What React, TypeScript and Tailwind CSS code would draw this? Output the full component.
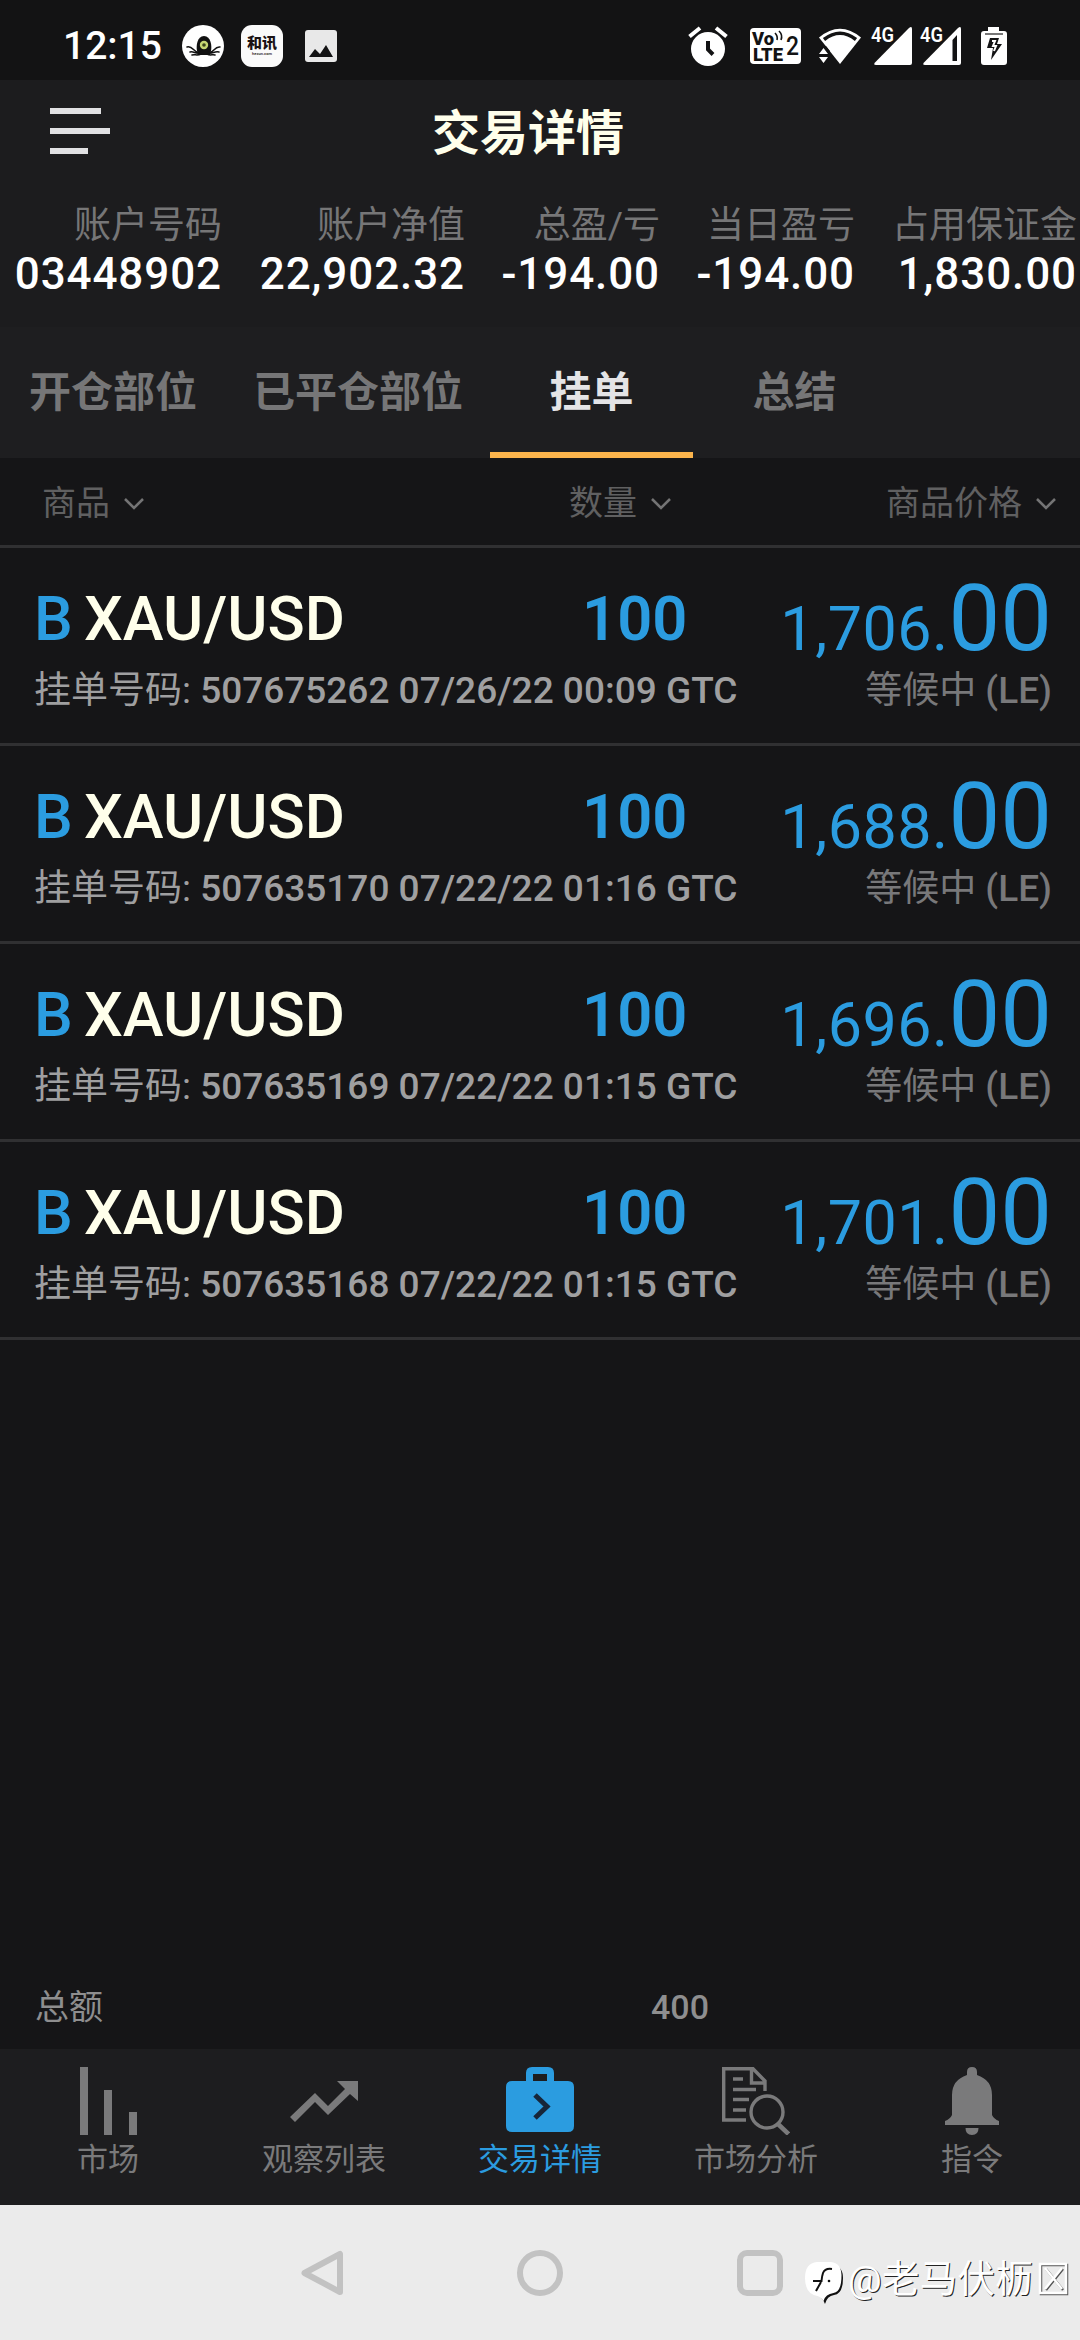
import type { ReactNode } from "react";

const account = [
  { label: "账户号码", value: "03448902", width: "w-[222px]" },
  { label: "账户净值", value: "22,902.32", width: "w-[243px]" },
  { label: "总盈/亏", value: "-194.00", width: "w-[195px]" },
  { label: "当日盈亏", value: "-194.00", width: "w-[195px]" },
  { label: "占用保证金", value: "1,830.00", width: "w-[222px]" }
];

const tabs = [
  { label: "开仓部位", width: "w-[226px]" },
  { label: "已平仓部位", width: "w-[264px]" },
  { label: "挂单", width: "w-[203px]", active: true },
  { label: "总结", width: "w-[203px]" }
];

const orders = [
  { id: "507675262", time: "07/26/22 00:09", price: "1,706." },
  { id: "507635170", time: "07/22/22 01:16", price: "1,688." },
  { id: "507635169", time: "07/22/22 01:15", price: "1,696." },
  { id: "507635168", time: "07/22/22 01:15", price: "1,701." }
];

function StatusBar() {
  return (
    <div className="flex h-20 shrink-0 items-center bg-[#131314] pr-[73px] pl-[63px] text-white">
      <span className="mt-3 w-[119px] text-[39px] leading-10 font-medium">12:15</span>

      <svg className="mt-3 h-[42px] w-[42px]" viewBox="0 0 42 42">
        <circle cx="21" cy="21" r="21" fill="#fff" />
        <path d="M15 26c-1-5 0-15 7-15s8 10 7 15l-3 4h-8z" fill="#111" />
        <g fill="none" stroke="#111" strokeWidth="1.500" strokeLinecap="round">
          <path d="M18 27c-6 2-7-7-13-5M18 28c-5 1-6-2-10-1M19 29c-4 2-6 0-9 1" />
          <path d="M26 27c6 2 6-6 12-5M26 28c5 1 6-2 11-1M25 29c4 2 5 0 8 1" />
        </g>
        <circle cx="22" cy="20" r="4.200" fill="#c5d672" />
        <circle cx="22" cy="20" r="1.800" fill="#39421a" />
      </svg>

      <span className="mt-3 ml-[17px] flex h-[42px] w-[42px] flex-col items-center rounded-[11px] bg-[#fafafa] pt-[10px] text-[#1b1214]">
        <span className="text-[15px] leading-4 font-black">和讯</span>
        <span className="text-[4px] leading-[6px] font-medium">hexun.com</span>
      </span>

      <svg className="mt-3 ml-[22px] h-8 w-8" viewBox="0 0 32 32">
        <rect width="32" height="32" rx="3" fill="#e8e8e8" />
        <path d="M4 27l6-8 5 5 6-9 7 12z" fill="#131314" />
      </svg>

      <div className="flex-1" />

      <svg className="mt-3 h-10 w-10" viewBox="0 0 40 40">
        <circle cx="20" cy="23" r="17" fill="#fff" />
        <path d="M1.500 10.500L12 2M38.500 10.500L28 2" stroke="#fff" strokeWidth="4" />
        <path d="M20 15v8.500l5 5" fill="none" stroke="#131314" strokeWidth="4" />
      </svg>

      <svg className="mt-3 ml-[22px] h-9 w-[51px]" viewBox="0 0 51 36">
        <rect width="51" height="36" rx="4" fill="#fff" />
        <g fill="#131314" fontWeight="900" fontSize="18">
          <text x="2" y="16.500" textLength="22" lengthAdjust="spacingAndGlyphs">Vo</text>
          <text x="3" y="32.500" textLength="30" lengthAdjust="spacingAndGlyphs">LTE</text>
          <text x="36" y="27" fontSize="25" fontWeight="500" textLength="13" lengthAdjust="spacingAndGlyphs">2</text>
        </g>
        <path d="M25 5q3 3 2 7M29 3q4 4 2 9" fill="none" stroke="#131314" strokeWidth="1.600" />
      </svg>

      <svg className="mt-3 ml-[18px] h-9 w-[42px]" viewBox="0 0 42 36">
        <path d="M0 9.500Q21-8 42 9.500L21 36z" fill="#fff" />
        <path d="M5 11.500Q21-1 37 11.500" fill="none" stroke="#131314" strokeWidth="3.600" />
        <path d="M-1 18h8l4 5-2 13h-10z" fill="#131314" />
        <path d="M0 26l4.500-6 4.500 6zM0 29h9l-4.500 6z" fill="#fff" />
      </svg>

      <Signal className="ml-[10px]" />
      <Signal className="ml-2" weak />

      <svg className="mt-3 ml-5 h-[38px] w-[26px]" viewBox="0 0 26 38">
        <path d="M7 4V0h11v4h5q3 0 3 3v28q0 3-3 3H3q-3 0-3-3V7q0-3 3-3z" fill="#fff" />
        <path d="M4 7h18" stroke="#777" strokeWidth="2" />
        <path d="M9 11h9l-2 6h5L10 33l2-12H6z" fill="#131314" />
        <path d="M11 14h3l-2 5h3l-2 5" fill="none" stroke="#fff" strokeWidth="2" />
      </svg>
    </div>
  );
}

function Signal({ className, weak }: { className: string; weak?: boolean }) {
  return (
    <svg className={`mt-3 h-[38px] w-[41px] overflow-visible ${className}`} viewBox="0 0 41 38">
      <path d="M41 2v34q0 2-2 2H5q-3 0-1-2.500L38 1q3-2.500 3 1z" fill="#fff" />
      {weak && <path d="M32.500 13l4.500-5v26h-4.500z" fill="#131314" />}
      <text
        x="0"
        y="15"
        fill="#fff"
        stroke="#131314"
        strokeWidth="3"
        paintOrder="stroke"
        fontSize="19.500"
        fontWeight="600"
        textLength="23"
        lengthAdjust="spacingAndGlyphs"
      >
        4G
      </text>
    </svg>
  );
}

function Header() {
  return (
    <header className="flex h-[108px] shrink-0">
      <div className="flex w-[432px] flex-col gap-[14px] pt-7 pl-[50px]">
        <span className="h-[6px] w-[51px] bg-[#e1e1e3]" />
        <span className="h-[6px] w-[60px] bg-[#e1e1e3]" />
        <span className="h-[6px] w-[38px] bg-[#e1e1e3]" />
      </div>
      <h1 className="text-[48px] leading-[108px] font-bold text-[#ffffeb]">交易详情</h1>
    </header>
  );
}

function Account() {
  return (
    <div className="flex h-[139px] shrink-0 pt-[17px] text-right">
      {account.map((item) => (
        <div key={item.label} className={`shrink-0 ${item.width}`}>
          <div className="text-[37px] leading-[42px] text-[#767677]">{item.label}</div>
          <div className="mt-[2px] text-[44px] leading-[50px] font-medium tracking-[0.9px] text-white">
            {item.value}
          </div>
        </div>
      ))}
    </div>
  );
}

function Tabs() {
  return (
    <nav className="flex h-[131px] shrink-0 bg-[#1e1e20] text-[42px] leading-[131px] font-bold text-[#767677]">
      {tabs.map((tab) => (
        <div
          key={tab.label}
          className={`text-center ${tab.width} ${
            tab.active ? "border-b-[6px] border-[#fbb44c] text-[#e4e4e6]" : ""
          }`}
        >
          {tab.label}
        </div>
      ))}
    </nav>
  );
}

function SortLabel({ children }: { children: ReactNode }) {
  return (
    <div className="flex items-center">
      {children}
      <svg className="ml-[14px] h-3 w-5" viewBox="0 0 20 12">
        <path d="M1 1l9 9 9-9" fill="none" stroke="#747475" strokeWidth="2.500" />
      </svg>
    </div>
  );
}

function OrderRow({ order }: { order: (typeof orders)[number] }) {
  return (
    <div className="flex h-[198px] justify-between border-b-[3px] border-[#303032] pr-[28px] pl-[34px]">
      <div className="pt-[39px]">
        <div className="flex text-[61.500px] leading-[64px] font-medium">
          <span className="w-[50px] text-[#2b9ce0]">B</span>
          <span className="w-[498px] text-[#ffffeb]">XAU/USD</span>
          <span className="font-semibold text-[#2b9ce0]">100</span>
        </div>
        <div className="mt-[18px] text-[37px] leading-[44px] whitespace-nowrap text-[#9f9fa0]">
          挂单号码: <span className="font-medium">{order.id} {order.time} GTC</span>
        </div>
      </div>
      <div className="pt-[25px] text-right">
        <div className="flex items-baseline text-[92px] leading-none text-[#2b9ce0]">
          <span className="text-[61px] tracking-[0.500px]">{order.price}</span>
          <span>00</span>
        </div>
        <div className="mt-[4px] text-[37px] leading-[44px] text-[#78787a]">
          等候中 <span className="font-medium">(LE)</span>
        </div>
      </div>
    </div>
  );
}

function NavItem({ label, active, children }: { label: string; active?: boolean; children: ReactNode }) {
  return (
    <div className={`flex w-[216px] flex-col items-center pt-[18px] ${active ? "text-[#2b9ce0]" : "text-[#7a7a7b]"}`}>
      <svg className="h-[68px] w-[68px]" viewBox="0 0 68 68" fill="currentColor">
        {children}
      </svg>
      <span className="mt-[7px] text-[31px] leading-9">{label}</span>
    </div>
  );
}

function BottomNav() {
  return (
    <nav className="flex h-[156px] shrink-0 bg-[#1d1d1f]">
      <NavItem label="市场">
        <path d="M6 0h8v68H6zM30 23h8v45h-8zM55 45h8v23h-8z" />
      </NavItem>
      <NavItem label="观察列表">
        <path d="M47 14h21v20l-8-7-22 21-13-13L5 55l-5-5 25-24 13 13 17-17z" />
      </NavItem>
      <NavItem label="交易详情" active>
        <path d="M20 14V6q0-6 6-6h16q6 0 6 6v8h14q6 0 6 6v39q0 6-6 6H6q-6 0-6-6V20q0-6 6-6zM27 14h14V7H27z" fillRule="evenodd" />
        <path d="M29 28l12 11.500L29 51" fill="none" stroke="#17263a" strokeWidth="5" />
      </NavItem>
      <NavItem label="市场分析">
        <g fill="none" stroke="currentColor" strokeWidth="3.400">
          <path d="M24 53H1.700V1.700H31L43 14v10M29.500 1.700V16H43M11 12h10M11 22.500h23M11 32.500h16M11 43h13" />
          <circle cx="45" cy="45" r="16" />
          <path d="M56 57l10.500 10" strokeWidth="4.500" />
        </g>
      </NavItem>
      <NavItem label="指令">
        <path d="M34 0q5 0 5 5v3q15 5 15 20v20q2 4 7 6v4H7v-4q5-2 7-6V28Q14 13 29 8V5q0-5 5-5zM27.500 61h13q0 7-6.500 7t-6.500-7z" />
      </NavItem>
    </nav>
  );
}

function SystemNav() {
  return (
    <div className="relative flex h-[135px] shrink-0 bg-[#ebebeb]">
      <svg className="mt-[45px] ml-[300px] h-[46px] w-[44px]" viewBox="0 0 44 46" fill="none" stroke="#c2c2c2" strokeWidth="6" strokeLinejoin="round">
        <path d="M40 4v38L4.500 23z" />
      </svg>
      <span className="mt-[45px] ml-[173px] h-[46px] w-[46px] rounded-full border-[6px] border-[#c2c2c2]" />
      <span className="mt-[45px] ml-[174px] h-[46px] w-[46px] rounded-[10px] border-[6px] border-[#c2c2c2]" />

      {/* author stamp over the system bar */}
      <div className="absolute top-[47px] left-[804px] flex items-center text-[37.500px] leading-[46px] text-white [text-shadow:1px_1px_0_#222]">
        <svg className="mt-[8px] mr-[3px] h-[46px] w-[41px]" viewBox="0 0 41 46">
          <path d="M14 5h14q11 1 11 13 0 16-9 17-7 1-9 9-2-5-5-8z" fill="#111" />
          <path d="M13 2h14q10 1 10.500 13 0 17-8 18-8 1-10 8-2-4-6-5Q1 34 1 18 1 3 13 2z" fill="#fff" />
          <path d="M28 9q-7-1-9 4-1 3-1.500 8H9M17 22l-5 9" fill="none" stroke="#111" strokeWidth="2" />
          <circle cx="25" cy="21" r="1.300" fill="#111" />
        </svg>
        <span className="tracking-[0.3px]">@老马伏枥</span>
        <svg className="ml-[5px] h-[36px] w-[32px]" viewBox="0 0 32 36" fill="none">
          <path d="M3 4h26v29H3zM8 29L25 8M8 8l17 21" stroke="#555" strokeWidth="2.500" />
          <path d="M2 3h26v29H2zM7 28L24 7M7 7l17 21" stroke="#fff" strokeWidth="2.500" />
        </svg>
      </div>
    </div>
  );
}

export default function App() {
  return (
    <div className="flex h-[2340px] w-[1080px] flex-col overflow-hidden bg-[#1c1c1e] font-[Roboto,'Noto_Sans_CJK_SC',sans-serif]">
      <StatusBar />
      <Header />
      <Account />
      <Tabs />
      <main className="flex flex-1 flex-col bg-[#151517]">
        <div className="flex h-[90px] border-b-[3px] border-[#303032] pt-[4px] pl-[42px] text-[34px] text-[#606061]">
          <div className="flex w-[527px]"><SortLabel>商品</SortLabel></div>
          <div className="flex w-[317px]"><SortLabel>数量</SortLabel></div>
          <SortLabel>商品价格</SortLabel>
        </div>
        {orders.map((order) => (
          <OrderRow key={order.id} order={order} />
        ))}
        <div className="mt-auto flex h-[84px] pl-[35px] text-[34px] leading-[84px] text-[#8e8e8f]">
          <span className="w-[616px]">总额</span>
          <span className="font-medium">400</span>
        </div>
      </main>
      <BottomNav />
      <SystemNav />
    </div>
  );
}
